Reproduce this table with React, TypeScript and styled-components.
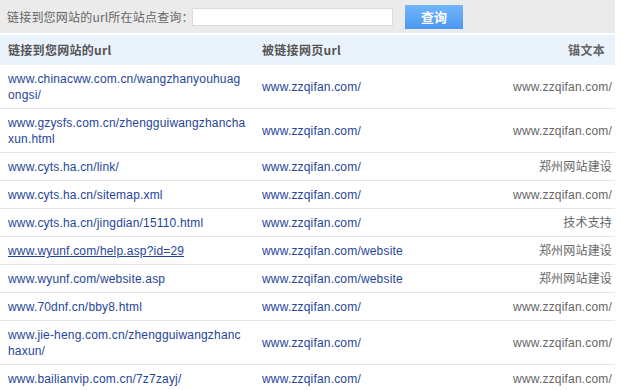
import styled, { createGlobalStyle } from 'styled-components';

const GlobalStyle = createGlobalStyle`
  body {
    margin: 0;
    background: #fff;
    font-family: "Liberation Sans", Arial, "Noto Sans CJK SC", sans-serif;
    font-size: 12px;
  }
`;

interface LinkRow {
  source: string[];
  target: string;
  anchor: string;
  hover?: boolean;
}

const rows: LinkRow[] = [
  { source: ['www.chinacww.com.cn/wangzhanyouhuag', 'ongsi/'], target: 'www.zzqifan.com/', anchor: 'www.zzqifan.com/' },
  { source: ['www.gzysfs.com.cn/zhengguiwangzhancha', 'xun.html'], target: 'www.zzqifan.com/', anchor: 'www.zzqifan.com/' },
  { source: ['www.cyts.ha.cn/link/'], target: 'www.zzqifan.com/', anchor: '郑州网站建设' },
  { source: ['www.cyts.ha.cn/sitemap.xml'], target: 'www.zzqifan.com/', anchor: 'www.zzqifan.com/' },
  { source: ['www.cyts.ha.cn/jingdian/15110.html'], target: 'www.zzqifan.com/', anchor: '技术支持' },
  { source: ['www.wyunf.com/help.asp?id=29'], target: 'www.zzqifan.com/website', anchor: '郑州网站建设', hover: true },
  { source: ['www.wyunf.com/website.asp'], target: 'www.zzqifan.com/website', anchor: '郑州网站建设' },
  { source: ['www.70dnf.cn/bby8.html'], target: 'www.zzqifan.com/', anchor: 'www.zzqifan.com/' },
  { source: ['www.jie-heng.com.cn/zhengguiwangzhanc', 'haxun/'], target: 'www.zzqifan.com/', anchor: 'www.zzqifan.com/' },
  { source: ['www.bailianvip.com.cn/7z7zayj/'], target: 'www.zzqifan.com/', anchor: 'www.zzqifan.com/' },
];

export default function App() {
  return (
    <>
      <GlobalStyle />
      <Page>
        <SearchBar>
          <Label>链接到您网站的url所在站点查询：</Label>
          <SearchInput type="text" />
          <SearchButton>查询</SearchButton>
        </SearchBar>

        <Table>
          <HeaderRow>
            <SourceCell>链接到您网站的url</SourceCell>
            <TargetCell>被链接网页url</TargetCell>
            <AnchorCell $head>锚文本</AnchorCell>
          </HeaderRow>
          {rows.map((row, index) => (
            <Row key={index}>
              <SourceCell>
                <Link $hover={row.hover}>
                  {row.source.map((line, i) => (
                    <span key={i}>
                      {i > 0 && <br />}
                      {line}
                    </span>
                  ))}
                </Link>
              </SourceCell>
              <TargetCell>
                <Link>{row.target}</Link>
              </TargetCell>
              <AnchorCell>{row.anchor}</AnchorCell>
            </Row>
          ))}
        </Table>
      </Page>
    </>
  );
}

const Page = styled.div`
  width: 615px;
  display: flex;
  flex-direction: column;
  gap: 2px;
`;

const SearchBar = styled.div`
  height: 33px;
  display: flex;
  align-items: center;
  padding-left: 7px;
  background: #ebebeb;
`;

const Label = styled.span`
  color: #666;
  font-family: "Noto Sans CJK SC", sans-serif;
  font-size: 12px;
  letter-spacing: 0.2px;
  width: 185px;
  white-space: nowrap;
`;

const SearchInput = styled.input`
  box-sizing: border-box;
  width: 201px;
  height: 18px;
  margin: 0;
  padding: 0 4px;
  border: 1px solid #dcdcdc;
  background: #fff;
  outline: none;
`;

const SearchButton = styled.button`
  box-sizing: border-box;
  width: 58px;
  height: 24px;
  margin-left: 12px;
  padding: 0;
  border: none;
  background: linear-gradient(#72b6fb, #4b97f2);
  color: #fff;
  font-family: "Noto Sans CJK SC", sans-serif;
  font-size: 13px;
  font-weight: bold;
  cursor: pointer;
`;

const Table = styled.div`
  display: flex;
  flex-direction: column;
`;

const Row = styled.div`
  display: grid;
  grid-template-columns: 262px 200px 1fr;
  align-items: center;
  padding: 6px 0 5px;
  border-bottom: 1px solid #e4e4e4;
  line-height: 16px;
  letter-spacing: 0.18px;
`;

const HeaderRow = styled(Row)`
  height: 30px;
  box-sizing: border-box;
  padding: 0;
  border-bottom: none;
  background: #eaf3fc;
  color: #555;
  font-family: "Noto Sans CJK SC", sans-serif;
  font-weight: bold;
  letter-spacing: 0.3px;
`;

const SourceCell = styled.div`
  padding-left: 8px;
`;

const TargetCell = styled.div`
  padding-left: 0;
`;

const AnchorCell = styled.div<{ $head?: boolean }>`
  text-align: right;
  padding-right: ${({ $head }) => ($head ? '10px' : '3px')};
  color: #666;
`;

const Link = styled.a<{ $hover?: boolean }>`
  color: #26459a;
  text-decoration: ${({ $hover }) => ($hover ? 'underline' : 'none')};
  cursor: pointer;
`;
